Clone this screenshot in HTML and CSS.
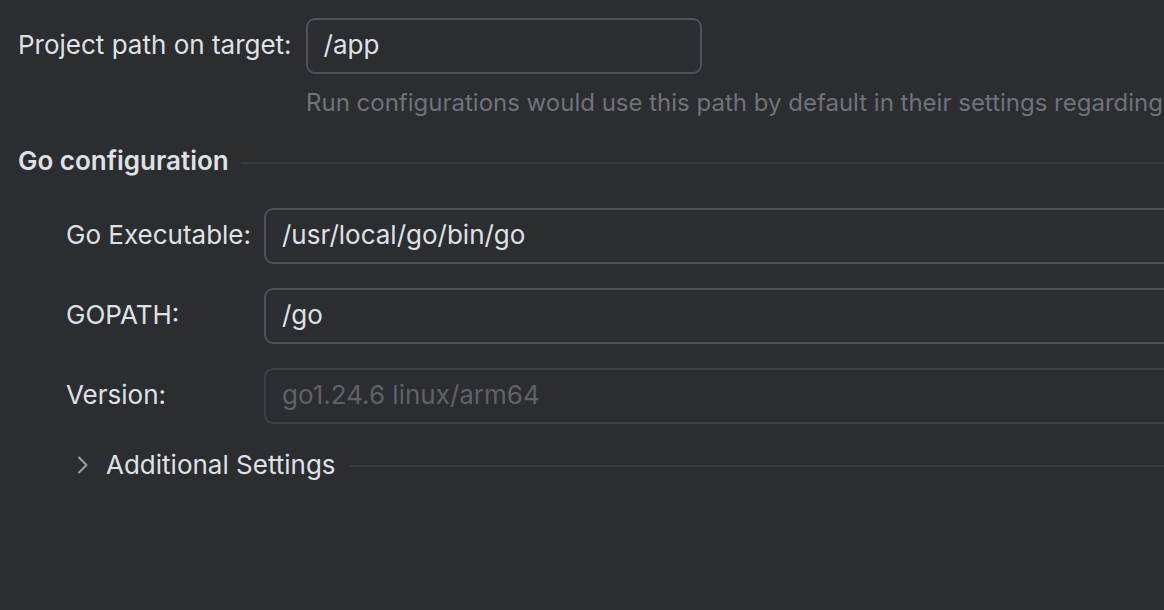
FILE: index.html
```html
<!DOCTYPE html>
<html>
<head>
<meta charset="utf-8">
<link rel="stylesheet" href="styles.css">
</head>
<body>
<div class="page">
  <div class="top-row">
    <label class="label">Project path on target:</label>
    <div class="field field-short"><span class="value">/app</span></div>
  </div>
  <div class="hint">Run configurations would use this path by default in their settings regarding</div>

  <div class="section-title">
    <span class="section-text">Go configuration</span>
    <span class="rule"></span>
  </div>

  <div class="form">
    <label class="label">Go Executable:</label>
    <div class="field field-wide"><span class="value">/usr/local/go/bin/go</span></div>
    <label class="label">GOPATH:</label>
    <div class="field field-wide"><span class="value">/go</span></div>
    <label class="label">Version:</label>
    <div class="field field-wide field-disabled"><span class="value">go1.24.6 linux/arm64</span></div>
  </div>

  <div class="collapsible">
    <svg class="chevron" width="12" height="20" viewBox="0 0 12 20"><path d="M2 2.5 L9.5 10 L2 17.5" fill="none" stroke="#9da0a8" stroke-width="2" stroke-linecap="round" stroke-linejoin="round"/></svg>
    <span class="collapsible-text">Additional Settings</span>
    <span class="rule rule-thin"></span>
  </div>
</div>
</body>
</html>
```

FILE: styles.css
```css
html, body {
  margin: 0;
  padding: 0;
  background: #2b2d30;
  overflow: hidden;
}
body {
  width: 1164px;
  height: 610px;
  font-family: Inter, "Noto Sans", sans-serif;
  font-size: 26px;
  color: #dfe1e5;
}
.page {
  padding: 18px 0 0 18px;
}
.top-row {
  display: flex;
  align-items: center;
  gap: 14px;
}
.label {
  white-space: nowrap;
  padding-bottom: 3px;
}
.field {
  box-sizing: border-box;
  height: 56px;
  border: 2px solid #4e5157;
  border-radius: 9px;
  display: flex;
  align-items: center;
  padding: 0 16px 3px;
  white-space: nowrap;
}
.field-short {
  width: 396px;
}
.field-wide {
  width: 1000px;
}
.field-disabled {
  border-color: #3e4045;
  color: #5f6268;
}
.hint {
  margin: 13px 0 0 288px;
  color: #6f737a;
  font-size: 24px;
  white-space: nowrap;
  line-height: 32px;
  overflow: hidden;
  width: 858px;
}
.section-title {
  display: flex;
  align-items: center;
  margin-top: 26px;
  height: 32px;
  white-space: nowrap;
}
.section-text {
  font-weight: 600;
  padding-bottom: 2px;
}
.rule {
  flex: 1;
  height: 2px;
  background: #393b40;
  margin-left: 12px;
  margin-top: 4px;
}
.form {
  display: grid;
  grid-template-columns: 198px 1000px;
  row-gap: 24px;
  align-items: center;
  margin: 31px 0 0 48px;
}
.collapsible {
  display: flex;
  align-items: center;
  margin: 25px 0 0 59px;
  height: 32px;
  white-space: nowrap;
}
.chevron {
  flex: none;
}
.collapsible-text {
  margin-left: 17px;
  padding-bottom: 2px;
}
.rule-thin {
  margin-left: 14px;
  margin-top: 2px;
}
```
